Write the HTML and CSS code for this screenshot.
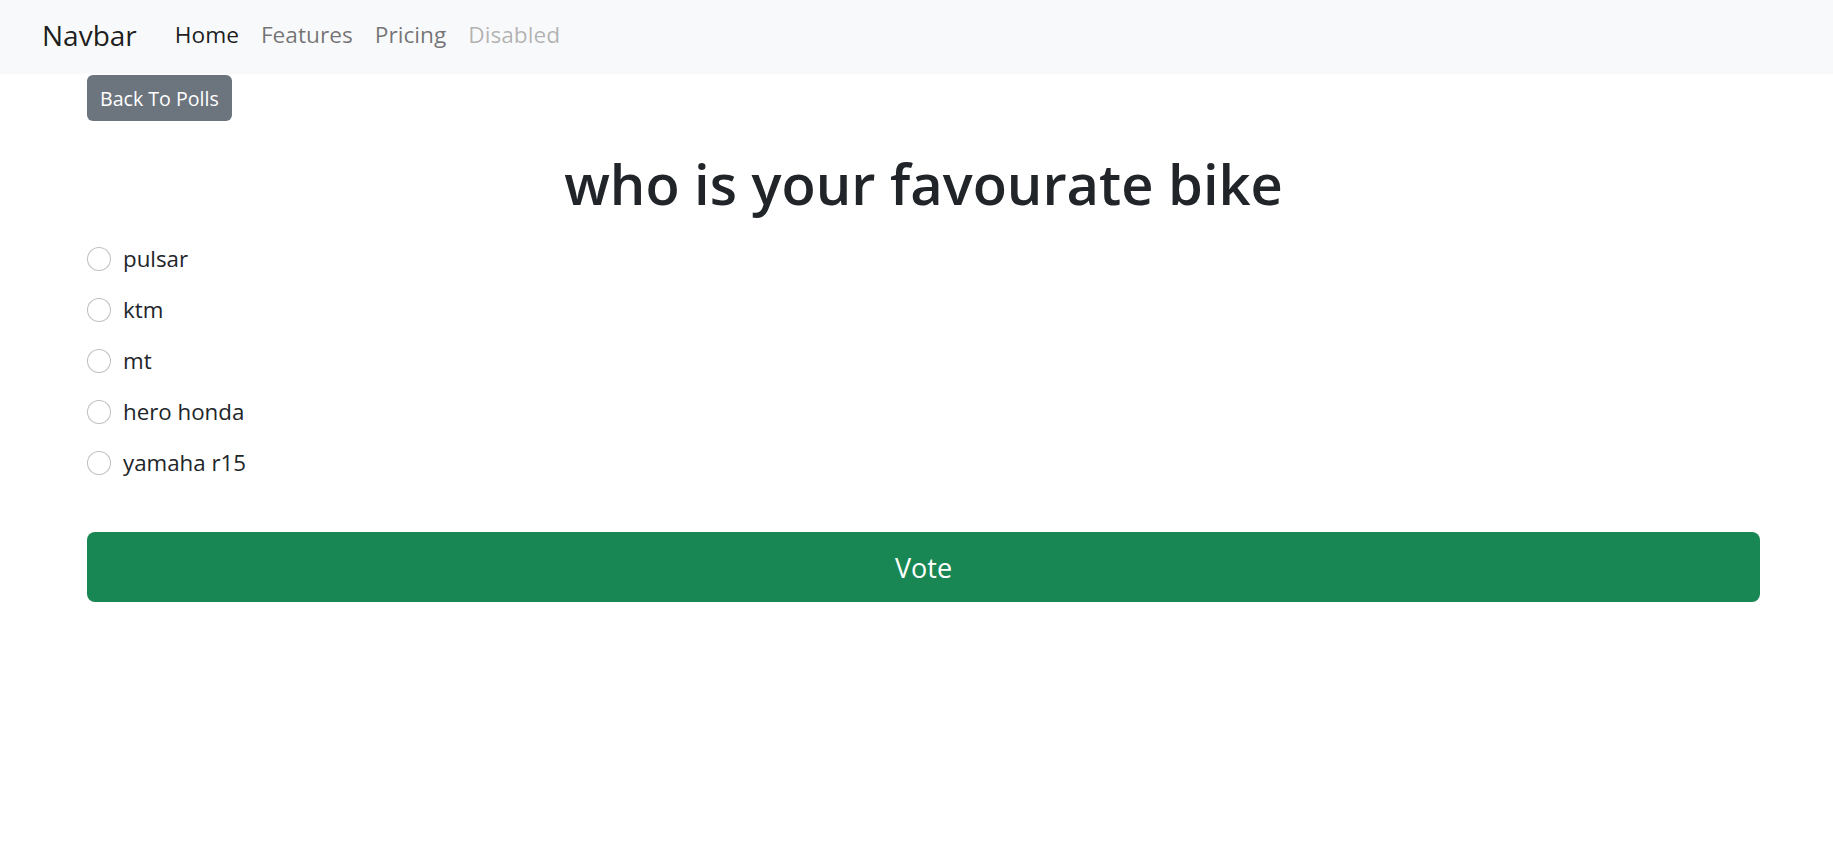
FILE: index.html
```html
<!DOCTYPE html>
<html lang="en">
<head>
<meta charset="utf-8">
<title>Poll</title>
<link rel="stylesheet" href="styles.css">
</head>
<body>
<nav class="navbar">
  <a class="brand" href="#">Navbar</a>
  <ul class="nav">
    <li><a class="nav-link active" href="#">Home</a></li>
    <li><a class="nav-link" href="#">Features</a></li>
    <li><a class="nav-link" href="#">Pricing</a></li>
    <li><a class="nav-link disabled" href="#">Disabled</a></li>
  </ul>
</nav>
<main class="container">
  <a class="btn-back" href="#">Back To Polls</a>
  <h1 class="title">who is your favourate bike</h1>
  <form class="poll">
    <div class="options">
      <label class="option"><input type="radio" name="bike" class="radio"><span>pulsar</span></label>
      <label class="option"><input type="radio" name="bike" class="radio"><span>ktm</span></label>
      <label class="option"><input type="radio" name="bike" class="radio"><span>mt</span></label>
      <label class="option"><input type="radio" name="bike" class="radio"><span>hero honda</span></label>
      <label class="option"><input type="radio" name="bike" class="radio"><span>yamaha r15</span></label>
    </div>
    <button type="button" class="btn-vote">Vote</button>
  </form>
</main>
</body>
</html>
```
FILE: styles.css
```css
* { box-sizing: border-box; }
html, body { margin: 0; padding: 0; }
body {
  font-family: "Open Sans", "Noto Sans", sans-serif;
  color: #212529;
  background: #fff;
}
a { text-decoration: none; }

.navbar {
  height: 74px;
  background: #f8f9fa;
  display: flex;
  align-items: center;
  padding: 0 0 5px 42px;
}
.brand {
  font-size: 28px;
  color: rgba(0,0,0,0.9);
  margin-right: 27px;
}
.nav {
  list-style: none;
  margin: 0;
  padding: 0;
  display: flex;
}
.nav-link {
  display: block;
  font-size: 22.7px;
  padding: 0 11px;
  color: rgba(0,0,0,0.55);
}
.nav-link.active { color: rgba(0,0,0,0.9); }
.nav-link.disabled { color: rgba(0,0,0,0.3); }

.container {
  margin: 0 73px 0 87px;
}
.btn-back {
  display: inline-flex;
  align-items: center;
  height: 46px;
  margin-top: 1px;
  padding: 0 13px;
  background: #6c757d;
  color: #fff;
  font-size: 19.6px;
  border-radius: 6px;
}
.title {
  margin: 29px 0 0;
  font-size: 56px;
  font-weight: 600;
  line-height: 1.2;
  text-align: center;
  color: #212529;
}
.options {
  margin-top: 16px;
  display: flex;
  flex-direction: column;
}
.option {
  height: 51px;
  display: flex;
  align-items: center;
  gap: 12px;
  font-size: 22.3px;
  color: #212529;
}
.radio {
  appearance: none;
  -webkit-appearance: none;
  width: 24px;
  height: 24px;
  margin: 0;
  border: 1px solid rgba(0,0,0,0.25);
  border-radius: 50%;
  background: #fff;
  flex: none;
}
.btn-vote {
  display: block;
  width: 100%;
  height: 70px;
  margin-top: 44px;
  border: 0;
  border-radius: 8px;
  background: #198754;
  color: #fff;
  font-family: inherit;
  font-size: 27px;
}
```
